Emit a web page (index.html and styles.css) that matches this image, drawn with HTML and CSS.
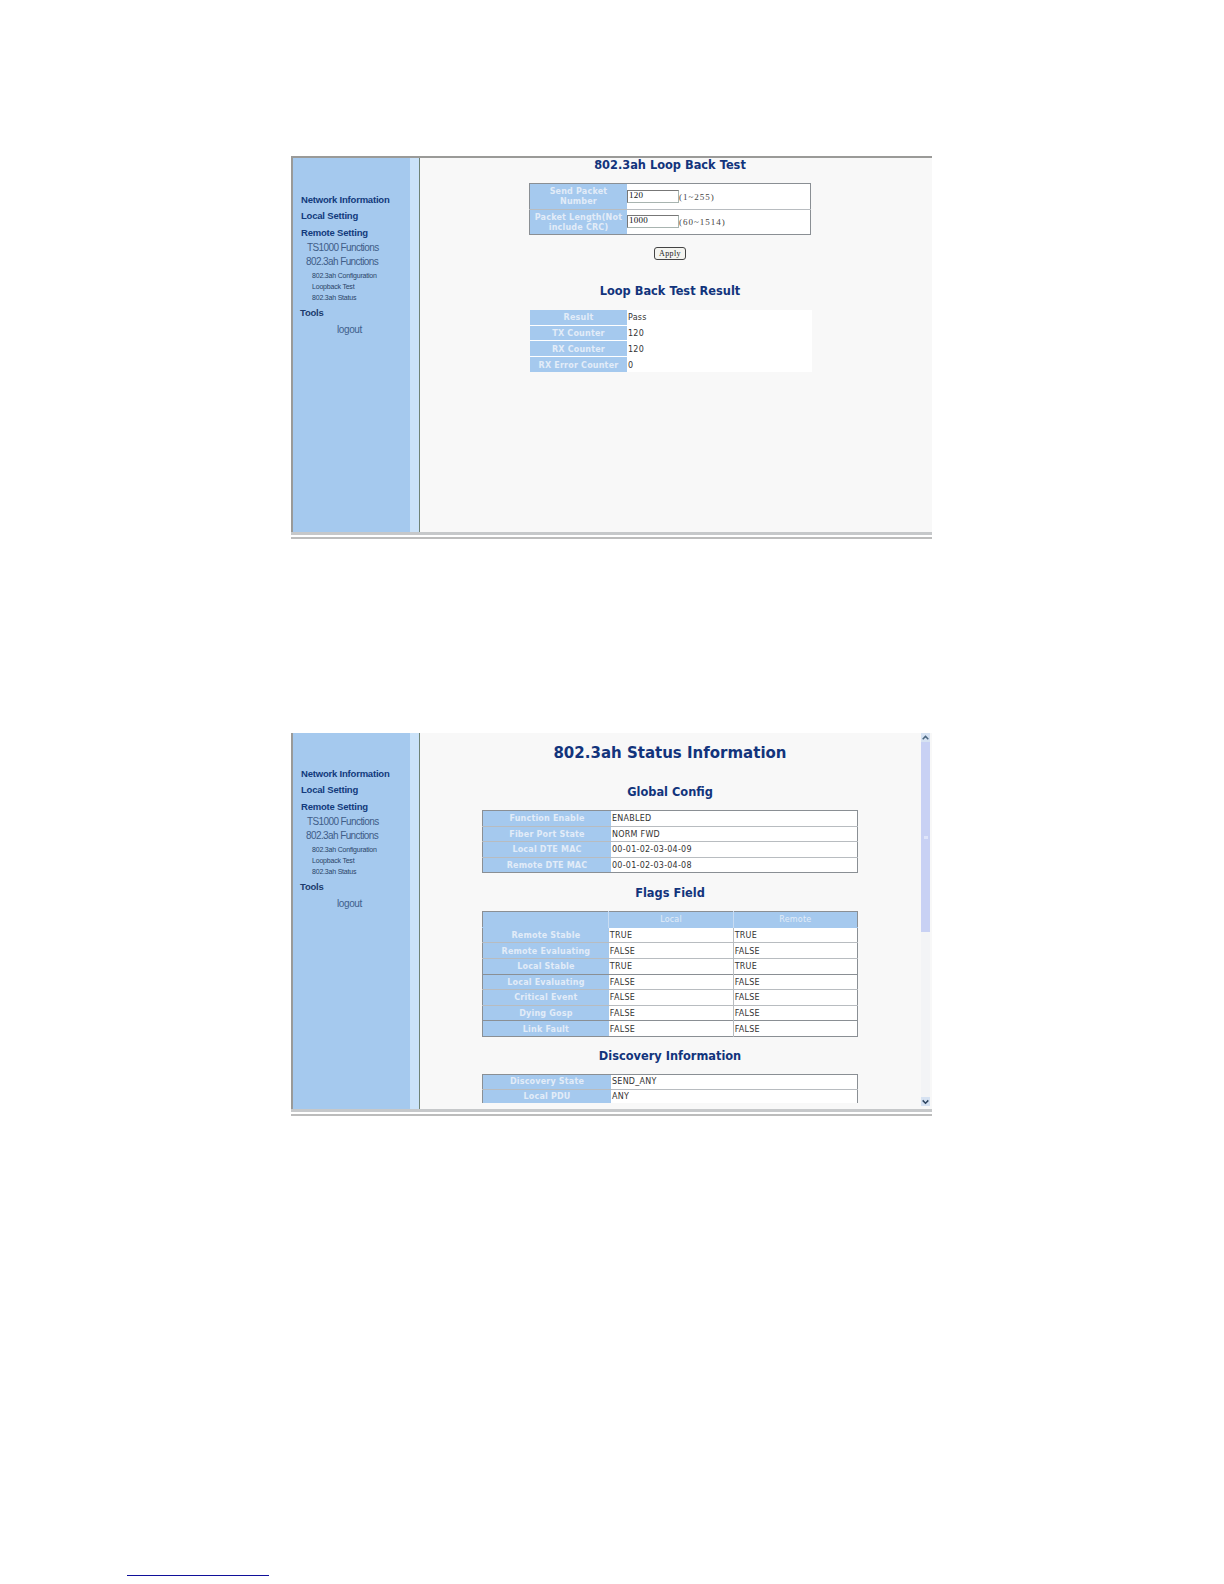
FILE: index.html
```html
<!DOCTYPE html>
<html lang="en">
<head>
    <meta charset="UTF-8">
    <title>802.3ah Loop Back Test</title>
    <link rel="stylesheet" href="styles.css">
</head>
<body>
    <!-- Loop back test screen -->
    <div class="shot">
        <div class="sidebar">
            <a class="nav-main">Network Information</a>
            <a class="nav-main">Local Setting</a>
            <a class="nav-main nav-remote">Remote Setting</a>
            <a class="nav-sub">TS1000 Functions</a>
            <a class="nav-sub">802.3ah Functions</a>
            <a class="nav-leaf">802.3ah Configuration</a>
            <a class="nav-leaf">Loopback Test</a>
            <a class="nav-leaf">802.3ah Status</a>
            <a class="nav-main nav-tools">Tools</a>
            <a class="nav-logout">logout</a>
        </div>
        <div class="strip"></div>
        <div class="content">
            <h3 class="first-title">802.3ah Loop Back Test</h3>
            <table class="grid test-form">
                <tr>
                    <th>Send Packet Number</th>
                    <td><span class="fake-input">120</span><span class="range">(1~255)</span></td>
                </tr>
                <tr>
                    <th>Packet Length(Not include CRC)</th>
                    <td><span class="fake-input">1000</span><span class="range">(60~1514)</span></td>
                </tr>
            </table>
            <div class="apply-row"><button class="apply">Apply</button></div>
            <h3 class="result-title">Loop Back Test Result</h3>
            <table class="grid result">
                <tr><th>Result</th><td>Pass</td></tr>
                <tr><th>TX Counter</th><td>120</td></tr>
                <tr><th>RX Counter</th><td>120</td></tr>
                <tr><th>RX Error Counter</th><td>0</td></tr>
            </table>
        </div>
    </div>

    <!-- Status screen -->
    <div class="shot second">
        <div class="sidebar">
            <a class="nav-main">Network Information</a>
            <a class="nav-main">Local Setting</a>
            <a class="nav-main nav-remote">Remote Setting</a>
            <a class="nav-sub">TS1000 Functions</a>
            <a class="nav-sub">802.3ah Functions</a>
            <a class="nav-leaf">802.3ah Configuration</a>
            <a class="nav-leaf">Loopback Test</a>
            <a class="nav-leaf">802.3ah Status</a>
            <a class="nav-main nav-tools">Tools</a>
            <a class="nav-logout">logout</a>
        </div>
        <div class="strip"></div>
        <div class="content status">
            <h1>802.3ah Status Information</h1>
            <h3 class="global-title">Global Config</h3>
            <table class="grid wide global">
                <tr><th>Function Enable</th><td>ENABLED</td></tr>
                <tr><th>Fiber Port State</th><td>NORM FWD</td></tr>
                <tr><th>Local DTE MAC</th><td>00-01-02-03-04-09</td></tr>
                <tr><th>Remote DTE MAC</th><td>00-01-02-03-04-08</td></tr>
            </table>
            <h3 class="flags-title">Flags Field</h3>
            <table class="grid wide flags">
                <tr class="head"><th></th><th>Local</th><th>Remote</th></tr>
                <tr><th>Remote Stable</th><td>TRUE</td><td>TRUE</td></tr>
                <tr><th>Remote Evaluating</th><td>FALSE</td><td>FALSE</td></tr>
                <tr><th>Local Stable</th><td>TRUE</td><td>TRUE</td></tr>
                <tr class="dark"><th>Local Evaluating</th><td>FALSE</td><td>FALSE</td></tr>
                <tr><th>Critical Event</th><td>FALSE</td><td>FALSE</td></tr>
                <tr><th>Dying Gosp</th><td>FALSE</td><td>FALSE</td></tr>
                <tr class="dark"><th>Link Fault</th><td>FALSE</td><td>FALSE</td></tr>
            </table>
            <h3 class="discovery-title">Discovery Information</h3>
            <table class="grid wide cut">
                <tr><th>Discovery State</th><td>SEND_ANY</td></tr>
                <tr><th>Local PDU</th><td>ANY</td></tr>
            </table>
        </div>
        <div class="scrollbar">
            <svg class="arrow" viewBox="0 0 8 8"><path d="M1.5 5.5 L4 3 L6.5 5.5" fill="none" stroke="#4a6680" stroke-width="1.3"/></svg>
            <div class="thumb"></div>
            <svg class="arrow arrow-down" viewBox="0 0 8 8"><path d="M1.5 3 L4 5.5 L6.5 3" fill="none" stroke="#2d4560" stroke-width="1.3"/></svg>
        </div>
    </div>

    <div class="footnote-rule"></div>
</body>
</html>
```

FILE: styles.css
```css
body {
    margin: 0;
    height: 1584px;
    background: #fff;
    font-family: "DejaVu Sans", sans-serif;
    overflow: hidden;
}

.shot {
    display: flex;
    width: 641px;
    height: 379px;
    margin: 156px 0 0 291px;
    border-top: 2px solid #9a9a98;
    border-bottom: 3px solid #c6c8ca;
    box-shadow: 0 2px 0 #fff, 0 4px 0 #bcbcbc;
    box-sizing: border-box;
    background: #f8f8f8;
}

.second {
    margin-top: 198px;
    border-top: none;
}

.sidebar {
    width: 119px;
    flex-shrink: 0;
    box-sizing: border-box;
    background: #a5c9ee;
    border-left: 2px solid #9a9a98;
    padding-top: 34px;
    display: flex;
    flex-direction: column;
}

.second .sidebar {
    padding-top: 33px;
}

.strip {
    width: 10px;
    flex-shrink: 0;
    box-sizing: border-box;
    background: #cae2f9;
    border-right: 1px solid #6f8376;
}

.nav-main {
    color: #123a7c;
    font: bold 9.5px "Liberation Sans", sans-serif;
    letter-spacing: -0.2px;
    line-height: 16px;
    padding-left: 8px;
    white-space: nowrap;
}

.nav-remote {
    margin-top: 1px;
}

.nav-tools {
    color: #1c3b6c;
    padding-left: 7px;
    margin-top: 2px;
}

.nav-sub {
    color: #3f5d88;
    font: 10px "Liberation Sans", sans-serif;
    letter-spacing: -0.6px;
    line-height: 14px;
    padding-left: 14px;
    white-space: nowrap;
}

.nav-sub + .nav-sub {
    padding-left: 13px;
    margin-bottom: 1px;
}

.nav-leaf {
    color: #2a4468;
    font: 7px "Liberation Sans", sans-serif;
    letter-spacing: -0.2px;
    line-height: 11px;
    padding-left: 19px;
    white-space: nowrap;
}

.nav-logout {
    color: #40608c;
    font: 10px "Liberation Sans", sans-serif;
    letter-spacing: -0.4px;
    line-height: 16px;
    padding-left: 44px;
    margin-top: 1px;
}

.content {
    width: 500px;
    flex-shrink: 0;
    display: flex;
    flex-direction: column;
    align-items: center;
}

h1, h3 {
    margin: 0;
    color: #12347c;
    font-family: "DejaVu Sans", sans-serif;
    font-weight: bold;
    text-align: center;
    white-space: nowrap;
    flex-shrink: 0;
}

h1 {
    font-size: 15px;
    line-height: 20px;
    margin-top: 10px;
}

h3 {
    font-size: 11.4px;
    line-height: 14px;
}

.result-title { margin-top: 24px; }
.global-title { margin-top: 22px; }
.flags-title { margin-top: 13px; }
.discovery-title { margin-top: 12px; }

.grid {
    border-collapse: collapse;
    table-layout: fixed;
    font-size: 8px;
    line-height: 10px;
    background: #fff;
    flex-shrink: 0;
}

.grid th {
    background: #a5c9ee;
    color: #e2ecf8;
    font-weight: bold;
    font-family: "DejaVu Sans", sans-serif;
    text-align: center;
    padding: 2px 0 0;
    letter-spacing: 0.2px;
}

.grid td {
    color: #333;
    padding: 2px 0 0 1px;
    letter-spacing: 0.25px;
    white-space: nowrap;
}

.test-form {
    width: 282px;
    height: 52px;
    margin-top: 11px;
    border: 1px solid #8a8f94;
}

.test-form tr + tr { border-top: 1px solid #b8bcc0; }
.test-form th { width: 97px; }
.test-form td { padding: 0; }

.fake-input {
    display: inline-block;
    width: 52px;
    height: 13px;
    box-sizing: border-box;
    border: 1px solid #a8b4b0;
    border-top-color: #777;
    border-left-color: #777;
    font: 9px/9px "Liberation Serif", serif;
    color: #111;
    padding-left: 1px;
    vertical-align: middle;
    background: #fff;
}

.range {
    font: 9px "Liberation Serif", serif;
    color: #444;
    letter-spacing: 1px;
    vertical-align: middle;
}

.apply-row {
    display: flex;
    justify-content: center;
    margin-top: 12px;
}

.apply {
    width: 32px;
    height: 13px;
    padding: 0;
    background: #f4f4f0;
    border: 1px solid #444;
    border-radius: 3px;
    font: 8px/9px "Liberation Serif", serif;
    color: #222;
    letter-spacing: 0.4px;
}

.result {
    width: 282px;
    height: 62px;
    margin-top: 12px;
    margin-left: 2px;
}

.result tr + tr { border-top: 1px solid #fff; }
.result th { width: 97px; }

.wide {
    width: 376px;
    border: 1px solid #8a8f94;
}

.wide tr + tr { border-top: 1px solid #b8bcc0; }
.wide th { width: 128px; }
.wide tr { height: 15px; }

.global {
    height: 63px;
    margin-top: 11px;
}

.flags {
    height: 126px;
    margin-top: 11px;
}

.flags th { width: 125px; }
.flags th + th { width: 123px; border-left: 1px solid #c8dcf2; font-weight: normal; }
.flags td + td { border-left: 1px solid #b8bcc0; }
.flags .head + tr { border-top-color: #a5c9ee; }
.flags .dark { border-top-color: #8a8f94; }

.cut {
    margin-top: 11px;
    border-bottom: none;
    line-height: 8px;
}

.cut tr { height: 15px; }
.cut th { padding-top: 0; }
.cut td { padding-top: 0; }

.status {
    overflow: hidden;
    height: 370px;
}

.scrollbar {
    width: 9px;
    height: 373px;
    margin: 0 2px 0 1px;
    flex-shrink: 0;
    display: flex;
    flex-direction: column;
    background: #f3f4f6;
}

.arrow {
    width: 9px;
    height: 9px;
    background: #d6e2f2;
    flex-shrink: 0;
}

.arrow-down {
    margin-top: auto;
}

.thumb {
    height: 190px;
    background: #c8d1f4;
    display: flex;
    align-items: center;
    justify-content: center;
}

.thumb::after {
    content: "";
    width: 4px;
    height: 3px;
    background: #dfe5fa;
}

.footnote-rule {
    width: 142px;
    height: 1px;
    margin: 463px 0 0 127px;
    background: #10109a;
}
```
